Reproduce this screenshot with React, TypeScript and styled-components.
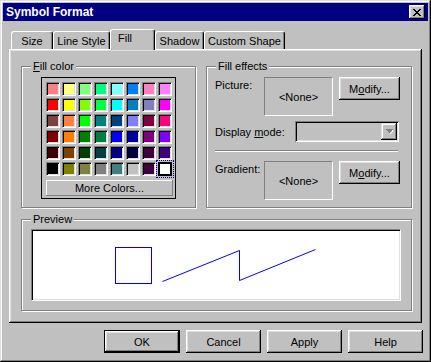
import React from "react";
import styled, { createGlobalStyle } from "styled-components";

const GlobalStyle = createGlobalStyle`
  html, body {
    margin: 0;
    padding: 0;
    background: #c0c0c0;
  }
  body {
    font-family: "Liberation Sans", Arial, sans-serif;
    font-size: 11px;
    color: #000;
  }
`;

const COLORS: string[][] = [
  ["#FF8080", "#FFFF80", "#80FF80", "#00FF80", "#80FFFF", "#0080FF", "#FF80C0", "#FF80FF"],
  ["#FF0000", "#FFFF00", "#80FF00", "#00FF40", "#00FFFF", "#0080C0", "#8080C0", "#FF00FF"],
  ["#804040", "#FF8040", "#00FF00", "#008080", "#004080", "#8080FF", "#800040", "#FF0080"],
  ["#800000", "#FF8000", "#008000", "#008040", "#0000FF", "#0000A0", "#800080", "#8000FF"],
  ["#400000", "#804000", "#004000", "#004040", "#000080", "#000040", "#400040", "#400080"],
  ["#000000", "#808000", "#808040", "#808080", "#408080", "#C0C0C0", "#400040", "#FFFFFF"],
];

const TABS = [
  { label: "Size", w: 42 },
  { label: "Line Style", w: 57 },
  { label: "Fill", w: 45, active: true },
  { label: "Shadow", w: 49 },
  { label: "Custom Shape", w: 81 },
];

// #region Window frame

const Window = styled.div`
  box-sizing: border-box;
  width: 431px;
  height: 362px;
  padding: 3px;
  background: #c0c0c0;
  box-shadow: inset -1px -1px #000, inset 1px 1px #dfdfdf, inset -2px -2px #808080,
    inset 2px 2px #fff;
  display: flex;
  flex-direction: column;
`;

const TitleBar = styled.div`
  height: 18px;
  background: #000080;
  color: #fff;
  font-weight: bold;
  font-size: 12px;
  display: flex;
  align-items: center;
  justify-content: space-between;
  padding: 0 3px 0 3px;
`;

const CloseButton = styled.div`
  box-sizing: border-box;
  width: 16px;
  height: 14px;
  background: #c0c0c0;
  box-shadow: inset -1px -1px #000, inset 1px 1px #fff, inset -2px -2px #808080,
    inset 2px 2px #dfdfdf;
  display: flex;
  align-items: center;
  justify-content: center;
`;

const Body = styled.div`
  flex: 1;
  display: flex;
  flex-direction: column;
  padding: 8px 6px 6px 6px;
`;

// #endregion

// #region Tabs

const TabRow = styled.div`
  display: flex;
  align-items: flex-end;
  height: 20px;
  padding-left: 2px;
`;

const Tab = styled.div<{ $active?: boolean; $w: number }>`
  box-sizing: border-box;
  width: ${(p) => p.$w}px;
  height: ${(p) => (p.$active ? 21 : 18)}px;
  margin-bottom: ${(p) => (p.$active ? -1 : 0)}px;
  background: #c0c0c0;
  border-top: 1px solid #fff;
  border-left: 1px solid #fff;
  border-right: 1px solid #000;
  border-radius: 3px 3px 0 0;
  box-shadow: inset -1px 0 #808080;
  position: relative;
  z-index: ${(p) => (p.$active ? 2 : 0)};
  display: flex;
  align-items: ${(p) => (p.$active ? "flex-start" : "center")};
  justify-content: ${(p) => (p.$active ? "flex-start" : "center")};
  padding: ${(p) => (p.$active ? "2px 0 0 7px" : "0")};
  white-space: nowrap;
`;

const Panel = styled.div`
  position: relative;
  z-index: 1;
  box-sizing: border-box;
  height: 274px;
  background: #c0c0c0;
  box-shadow: inset -1px -1px #000, inset 1px 1px #fff, inset -2px -2px #808080,
    inset 2px 2px #dfdfdf;
  padding: 17px 10px 12px 12px;
  display: flex;
  flex-direction: column;
  gap: 11px;
`;

// #endregion

// #region Groups

const GroupRow = styled.div`
  display: flex;
  gap: 10px;
  height: 142px;
`;

const Group = styled.div<{ $w?: number }>`
  position: relative;
  box-sizing: border-box;
  ${(p) => (p.$w ? `width: ${p.$w}px;` : "flex: 1;")}
  border: 1px solid #808080;
  box-shadow: inset 1px 1px #fff, 1px 1px #fff;
`;

const Legend = styled.span`
  position: absolute;
  top: -7px;
  left: 9px;
  padding: 0 2px;
  background: #c0c0c0;
  line-height: 13px;
`;

const U = styled.span`
  text-decoration: underline;
  text-underline-offset: 1px;
`;

// #endregion

// #region Color grid

const ColorBody = styled.div`
  display: flex;
  justify-content: center;
  padding-top: 10px;
`;

const Palette = styled.div`
  box-sizing: border-box;
  width: 135px;
  height: 122px;
  border: 1px solid #000;
  padding: 4px 3px 2px 4px;
  display: flex;
  flex-direction: column;
`;

const Swatches = styled.div`
  display: grid;
  grid-template-columns: repeat(8, 14px);
  grid-auto-rows: 14px;
  gap: 2px;
`;

const Swatch = styled.div<{ $color: string; $selected?: boolean }>`
  box-sizing: border-box;
  width: 14px;
  height: 14px;
  background: ${(p) => p.$color};
  border: 1px solid;
  border-color: #808080 #fff #fff #808080;
  box-shadow: inset 1px 1px #000, inset -1px -1px #dfdfdf;
  ${(p) =>
    p.$selected &&
    `
    border: 2px solid #000;
    box-shadow: none;
    outline: 1px dotted #000080;
    outline-offset: 1px;
  `}
`;

const MoreColors = styled.div`
  box-sizing: border-box;
  margin-top: 4px;
  height: 16px;
  width: 127px;
  display: flex;
  align-items: center;
  justify-content: center;
  box-shadow: inset -1px -1px #808080, inset 1px 1px #fff;
`;

// #endregion

// #region Fill effects

const EffectsBody = styled.div`
  padding: 10px 11px 9px 8px;
  display: flex;
  flex-direction: column;
`;

const EffectRow = styled.div`
  display: flex;
  align-items: flex-start;
`;

const FieldLabel = styled.div<{ $w: number }>`
  width: ${(p) => p.$w}px;
  line-height: 14px;
  padding-top: 1px;
  white-space: nowrap;
`;

const NoneBox = styled.div`
  box-sizing: border-box;
  width: 69px;
  height: 39px;
  border: 1px solid;
  border-color: #808080 #fff #fff #808080;
  display: flex;
  align-items: center;
  justify-content: center;
  margin-right: 6px;
`;

const Button = styled.div<{ $w: number; $h?: number; $default?: boolean }>`
  box-sizing: border-box;
  width: ${(p) => p.$w}px;
  height: ${(p) => p.$h ?? 23}px;
  background: #c0c0c0;
  display: flex;
  align-items: center;
  justify-content: center;
  ${(p) =>
    p.$default
      ? `border: 1px solid #000;
         box-shadow: inset -1px -1px #000, inset 1px 1px #fff, inset -2px -2px #808080, inset 2px 2px #dfdfdf;`
      : `box-shadow: inset -1px -1px #000, inset 1px 1px #fff, inset -2px -2px #808080, inset 2px 2px #dfdfdf;`}
`;

const ComboRow = styled.div`
  display: flex;
  align-items: center;
  margin-top: 5px;
`;

const Combo = styled.div`
  box-sizing: border-box;
  width: 104px;
  height: 21px;
  padding: 2px;
  display: flex;
  justify-content: flex-end;
  box-shadow: inset 1px 1px #808080, inset -1px -1px #fff, inset 2px 2px #000,
    inset -2px -2px #dfdfdf;
`;

const ComboButton = styled.div`
  box-sizing: border-box;
  width: 16px;
  height: 17px;
  display: flex;
  align-items: center;
  justify-content: center;
  box-shadow: inset -1px -1px #000, inset 1px 1px #dfdfdf, inset -2px -2px #808080,
    inset 2px 2px #fff;
`;

const Separator = styled.div`
  height: 1px;
  margin: 8px 2px 9px 0;
  background: #808080;
  border-bottom: 1px solid #fff;
`;

// #endregion

// #region Preview

const PreviewBody = styled.div`
  padding: 9px 10px 8px 9px;
`;

const PreviewCanvas = styled.div`
  box-sizing: border-box;
  height: 72px;
  background: #fff;
  border: 1px solid;
  border-color: #808080 #fff #fff #808080;
  box-shadow: inset 1px 1px #000, inset -1px -1px #dfdfdf;

  svg {
    display: block;
  }
`;

// #endregion

const ButtonRow = styled.div`
  display: flex;
  justify-content: flex-end;
  gap: 6px;
  margin-top: 7px;
  margin-right: -1px;
`;

const App = () => {
  return (
    <>
      <GlobalStyle />
      <Window>
        <TitleBar>
          <span>Symbol Format</span>
          <CloseButton>
            <svg width="8" height="7" viewBox="0 0 8 7" shapeRendering="crispEdges">
              <path
                d="M0 0h2v1h-2zM6 0h2v1h-2zM1 1h2v1h-2zM5 1h2v1h-2zM2 2h4v1h-4zM3 3h2v1h-2zM2 4h4v1h-4zM1 5h2v1h-2zM5 5h2v1h-2zM0 6h2v1h-2zM6 6h2v1h-2z"
                fill="#000"
              />
            </svg>
          </CloseButton>
        </TitleBar>
        <Body>
          <TabRow>
            {TABS.map((t) => (
              <Tab key={t.label} $w={t.w} $active={t.active}>
                {t.label}
              </Tab>
            ))}
          </TabRow>
          <Panel>
            <GroupRow>
              <Group $w={177}>
                <Legend>
                  <U>F</U>ill color
                </Legend>
                <ColorBody>
                  <Palette>
                    <Swatches>
                      {COLORS.flatMap((row, r) =>
                        row.map((c, i) => (
                          <Swatch key={`${r}-${i}`} $color={c} $selected={r === 5 && i === 7} />
                        ))
                      )}
                    </Swatches>
                    <MoreColors>More Colors...</MoreColors>
                  </Palette>
                </ColorBody>
              </Group>
              <Group>
                <Legend>Fill effects</Legend>
                <EffectsBody>
                  <EffectRow>
                    <FieldLabel $w={49}>Picture:</FieldLabel>
                    <NoneBox>&lt;None&gt;</NoneBox>
                    <Button $w={61}>
                      M<U>o</U>dify...
                    </Button>
                  </EffectRow>
                  <ComboRow>
                    <FieldLabel $w={80}>
                      Display <U>m</U>ode:
                    </FieldLabel>
                    <Combo>
                      <ComboButton>
                        <svg width="7" height="5" viewBox="0 0 7 5" shapeRendering="crispEdges">
                          <path d="M1 1h7v1h-1v1h-1v1h-1v1h-1v-1h1v-1h1v-1h1z" fill="#fff" />
                          <path d="M0 0h7v1h-1v1h-1v1h-1v1h-1v-1h-1v-1h-1v-1h-1z" fill="#808080" />
                        </svg>
                      </ComboButton>
                    </Combo>
                  </ComboRow>
                  <Separator />
                  <EffectRow>
                    <FieldLabel $w={49}>Gradient:</FieldLabel>
                    <NoneBox>&lt;None&gt;</NoneBox>
                    <Button $w={61}>
                      M<U>o</U>dify...
                    </Button>
                  </EffectRow>
                </EffectsBody>
              </Group>
            </GroupRow>
            <Group style={{ height: 92 }}>
              <Legend>Preview</Legend>
              <PreviewBody>
                <PreviewCanvas>
                  <svg width="370" height="70" viewBox="0 0 370 70">
                    <rect x="83.5" y="17.5" width="36" height="36" fill="none" stroke="#0000ff" />
                    <polyline
                      points="130.5,51.5 207.5,20.5 207.5,50.5 283.5,19.5"
                      fill="none"
                      stroke="#0000ff"
                    />
                  </svg>
                </PreviewCanvas>
              </PreviewBody>
            </Group>
          </Panel>
          <ButtonRow>
            <Button $w={76} $default>
              OK
            </Button>
            <Button $w={75}>Cancel</Button>
            <Button $w={75}>Apply</Button>
            <Button $w={75}>Help</Button>
          </ButtonRow>
        </Body>
      </Window>
    </>
  );
};

export default App;
